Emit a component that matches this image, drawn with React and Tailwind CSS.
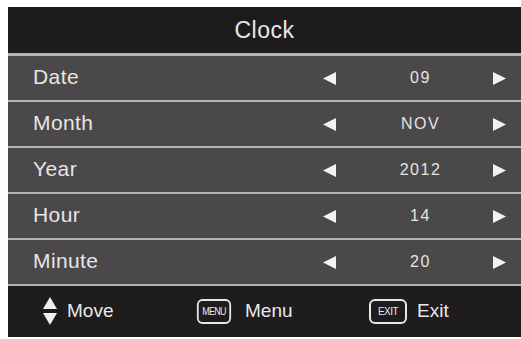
import React from "react";

const rows = [
  ["Date", "09"],
  ["Month", "NOV"],
  ["Year", "2012"],
  ["Hour", "14"],
  ["Minute", "20"],
];

function Left() {
  return (
    <svg width="13" height="13" viewBox="0 0 13 13">
      <polygon points="13,0 13,13 0,6.5" fill="#f2f2f2" />
    </svg>
  );
}
function Right() {
  return (
    <svg width="13" height="13" viewBox="0 0 13 13">
      <polygon points="0,0 0,13 13,6.5" fill="#f2f2f2" />
    </svg>
  );
}

export default function App() {
  return (
    <div
      className="w-[521px] h-[339px] bg-white pt-[7px] pl-[8px]"
      style={{ fontFamily: '"Liberation Sans", Arial, sans-serif' }}
    >
      <div className="w-[513px] flex flex-col bg-[#b4b2b3]">
        <div className="h-[46px] bg-[#1e1b1c] flex items-center justify-center text-[#e8e8e8] text-[23px] tracking-[0.5px]">
          Clock
        </div>
        <div className="flex flex-col gap-[2px] pt-[3px] pb-[2px]">
          {rows.map(([label, value]) => (
            <div key={label} className="h-[44px] bg-[#4a4849] flex items-center text-[#e6e6e6]">
              <div className="pl-[25px] w-[315px] text-[21px] tracking-[0.4px] -mt-[3px]">{label}</div>
              <div className="w-[13px] flex"><Left /></div>
              <div className="w-[157px] pl-[12px] text-center text-[16px] tracking-[1.5px] text-[#e4e4e4]">{value}</div>
              <div className="w-[13px] flex"><Right /></div>
            </div>
          ))}
        </div>
        <div className="h-[51px] bg-[#1f1c1d] flex items-center text-[#e8e8e8] text-[19px]">
          <div className="pl-[35px] flex items-center w-[187px]">
            <svg width="14" height="29" viewBox="0 0 14 29">
              <polygon points="7,0 14,12 0,12" fill="#f0f0f0" />
              <polygon points="0,16 14,16 7,28" fill="#f0f0f0" />
            </svg>
            <span className="ml-[10px]">Move</span>
          </div>
          <div className="flex items-center w-[174px]">
            <div className="w-[38px] h-[25px] border-2 border-[#e8e8e8] rounded-[6px] flex items-center justify-center text-[10px] leading-none tracking-[-0.8px] scale-x-90">MENU</div>
            <span className="ml-[12px]">Menu</span>
          </div>
          <div className="flex items-center">
            <div className="w-[38px] h-[25px] border-2 border-[#e8e8e8] rounded-[6px] flex items-center justify-center text-[10px] leading-none tracking-[-0.5px]">EXIT</div>
            <span className="ml-[10px]">Exit</span>
          </div>
        </div>
      </div>
    </div>
  );
}
